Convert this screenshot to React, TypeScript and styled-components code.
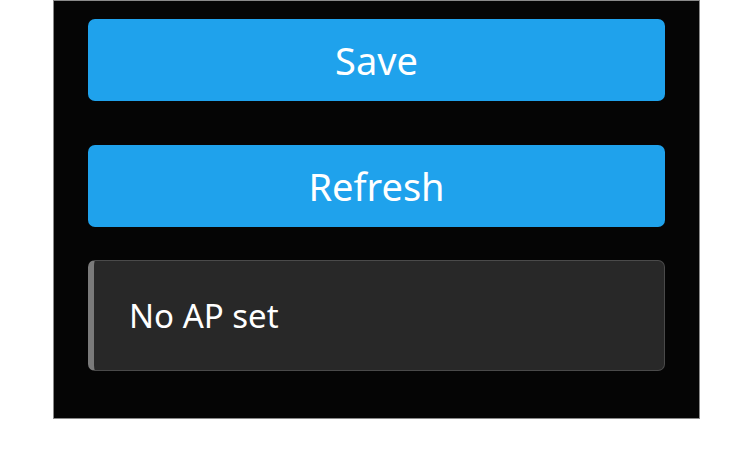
import styled, { createGlobalStyle } from 'styled-components'


const GlobalStyle = createGlobalStyle`
    html, body {
        margin: 0;
        padding: 0;
        background: #ffffff;
        font-family: "Noto Sans", "Open Sans", sans-serif;
    }
`

const Page = styled.div`
    display: flex;
    width: 750px;
    padding-left: 53px;
    box-sizing: border-box;
`

const Panel = styled.div`
    display: flex;
    flex-direction: column;
    width: 647px;
    height: 419px;
    box-sizing: border-box;
    padding: 18px 34px 0 34px;
    background-color: #050505;
    border: solid 1px #8a8a8a;
`

interface ButtonProps {
    gapAfter: number,
}
const ActionButton = styled.button<ButtonProps>`
    display: flex;
    justify-content: center;
    align-items: center;
    height: 82px;
    margin: 0 0 ${props => props.gapAfter}px 0;
    padding: 0;
    border: none;
    border-radius: 7px;
    background-color: #1fa2ec;
    color: #ffffff;
    font-family: "Noto Sans", sans-serif;
    font-size: 38px;
    font-weight: 400;
`

const StatusBox = styled.div`
    display: flex;
    align-items: center;
    height: 111px;
    box-sizing: border-box;
    padding-left: 35px;
    background-color: #282828;
    border: solid 1px #4a4a4a;
    border-left: solid 6px #7a7a7a;
    border-radius: 7px;
    color: #ffffff;
    font-size: 33px;
`


export default function App() {
    return (
        <Page>
            <GlobalStyle />
            <Panel>
                <ActionButton gapAfter={44}>Save</ActionButton>
                <ActionButton gapAfter={33}>Refresh</ActionButton>
                <StatusBox>No AP set</StatusBox>
            </Panel>
        </Page>
    )
}
